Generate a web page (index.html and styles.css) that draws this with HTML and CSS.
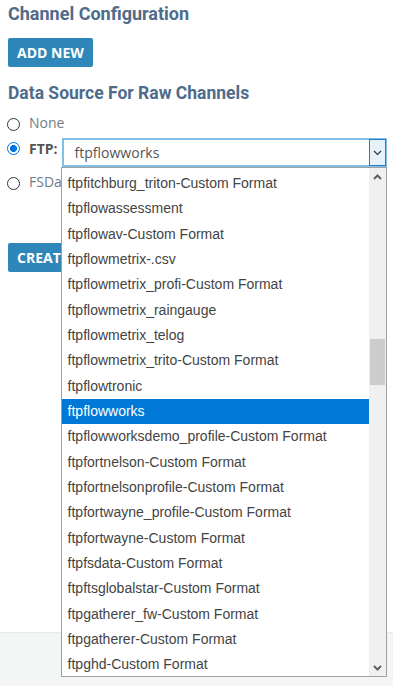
FILE: index.html
```
<!DOCTYPE html>
<html>
<head>
<meta charset="utf-8">
<link rel="stylesheet" href="styles.css">
</head>
<body>
<div class="page">
  <main class="main">
    <h1 class="title">Channel Configuration</h1>
    <button class="btn">ADD NEW</button>
    <h2 class="subtitle">Data Source For Raw Channels</h2>
    <div class="options">
      <div class="opt opt-none"><span class="radio"></span><span class="opt-label">None</span></div>
      <div class="opt opt-ftp">
        <span class="radio checked"></span><span class="opt-label bold">FTP:</span>
        <div class="select-wrap">
          <div class="select">
            <span class="select-value">ftpflowworks</span>
            <span class="select-arrow"><svg width="9" height="6" viewBox="0 0 9 6"><path d="M1 1 L4.5 4.5 L8 1" fill="none" stroke="#333" stroke-width="1.2"/></svg></span>
          </div>
          <div class="dropdown">
            <ul class="list">
              <li>ftpfitchburg_triton-Custom Format</li>
              <li>ftpflowassessment</li>
              <li>ftpflowav-Custom Format</li>
              <li>ftpflowmetrix-.csv</li>
              <li>ftpflowmetrix_profi-Custom Format</li>
              <li>ftpflowmetrix_raingauge</li>
              <li>ftpflowmetrix_telog</li>
              <li>ftpflowmetrix_trito-Custom Format</li>
              <li>ftpflowtronic</li>
              <li class="selected">ftpflowworks</li>
              <li>ftpflowworksdemo_profile-Custom Format</li>
              <li>ftpfortnelson-Custom Format</li>
              <li>ftpfortnelsonprofile-Custom Format</li>
              <li>ftpfortwayne_profile-Custom Format</li>
              <li>ftpfortwayne-Custom Format</li>
              <li>ftpfsdata-Custom Format</li>
              <li>ftpftsglobalstar-Custom Format</li>
              <li>ftpgatherer_fw-Custom Format</li>
              <li>ftpgatherer-Custom Format</li>
              <li>ftpghd-Custom Format</li>
            </ul>
            <div class="scrollbar">
              <span class="sb-btn"><svg width="9" height="6" viewBox="0 0 9 6"><path d="M1 5 L4.5 1.5 L8 5" fill="none" stroke="#606060" stroke-width="2"/></svg></span>
              <span class="sb-track"><span class="sb-thumb"></span></span>
              <span class="sb-btn"><svg width="9" height="6" viewBox="0 0 9 6"><path d="M1 1 L4.5 4.5 L8 1" fill="none" stroke="#606060" stroke-width="2"/></svg></span>
            </div>
          </div>
        </div>
      </div>
      <div class="opt opt-fs"><span class="radio"></span><span class="opt-label">FSData:</span></div>
    </div>
    <button class="btn create">CREATE</button>
  </main>
  <footer class="footer"></footer>
</div>
</body>
</html>
```
FILE: styles.css
```
* { box-sizing: border-box; }
html, body { margin: 0; padding: 0; }
body { font-family: "Open Sans", sans-serif; background: #f4f5f5; }
.page { display: flex; flex-direction: column; min-height: 686px; }
.main { background: #fff; min-height: 632px; padding: 0 8px; }
.footer { flex: 1; background: #f4f5f5; border-top: 1px solid #e9eaea; }

.title {
  margin: 0;
  font-family: Roboto, sans-serif;
  font-weight: 700;
  font-size: 18px;
  line-height: 28px;
  color: #4f6b8a;
}
.subtitle {
  margin: 14px 0 0;
  font-family: Roboto, sans-serif;
  font-weight: 700;
  font-size: 17.5px;
  line-height: 24px;
  color: #4f6b8a;
}
.btn {
  display: block;
  margin: 10px 0 0;
  height: 29px;
  padding: 0 9px;
  border: 0;
  border-radius: 2px;
  background: #2e87b8;
  color: #fff;
  font-family: "Open Sans", sans-serif;
  font-weight: 700;
  font-size: 14px;
}
.create { margin-top: 51px; }

.options { margin-top: 8px; }
.opt { display: flex; align-items: center; height: 20px; }
.opt-ftp { align-items: flex-start; height: 29px; margin-top: 5px; }
.opt-fs { margin-top: 5px; }
.radio {
  width: 13px; height: 13px;
  border: 1px solid #333;
  border-radius: 50%;
  background: #fff;
  flex: none;
  margin-left: -1px;
  margin-top: 2px;
}
.radio.checked {
  border-color: #0075db;
  background: radial-gradient(circle, #0075db 0 3.2px, #fff 3.8px);
  margin-top: 4px;
}
.opt-label {
  margin-left: 9px;
  font-size: 14px;
  line-height: 20px;
  color: #737b84;
}
.opt-label.bold { font-weight: 700; color: #555; margin-top: 1px; }

.select-wrap { position: relative; margin-left: 4px; flex: none; }
.select {
  width: 325px;
  height: 29px;
  border: 2px solid #80bfe6;
  display: flex;
  align-items: center;
  justify-content: space-between;
  background: #fff;
}
.select-value { padding-left: 11px; font-size: 14px; color: #555; line-height: 20px; }
.select-arrow {
  width: 17px; height: 27px;
  margin-right: -1px;
  border: 1px solid #2b7cc8;
  background: #e5f1fb;
  display: flex; align-items: center; justify-content: center;
}
.select-arrow svg { display: block; }

.dropdown {
  position: absolute;
  left: -1px;
  top: 100%;
  width: 326px;
  height: 510px;
  border: 1px solid #a0a0a0;
  background: #fff;
  display: flex;
  z-index: 5;
  overflow: hidden;
}
.list {
  list-style: none;
  margin: 0;
  padding: 3px 0 0;
  flex: 1;
  overflow: hidden;
  font-family: "Liberation Sans", Arial, sans-serif;
  font-size: 14px;
  color: #444;
}
.list li {
  height: 25.33px;
  line-height: 25.33px;
  padding-left: 6px;
  white-space: nowrap;
}
.list li.selected { background: #0078d7; color: #fff; }

.scrollbar {
  width: 17px;
  background: #f0f0f0;
  display: flex;
  flex-direction: column;
}
.sb-btn { height: 17px; display: flex; align-items: center; justify-content: center; flex: none; }
.sb-btn svg { display: block; }
.sb-track { flex: 1; position: relative; }
.sb-thumb {
  position: absolute;
  left: 1px;
  width: 15px;
  top: 154px;
  height: 46px;
  background: #cdcdcd;
}
```
